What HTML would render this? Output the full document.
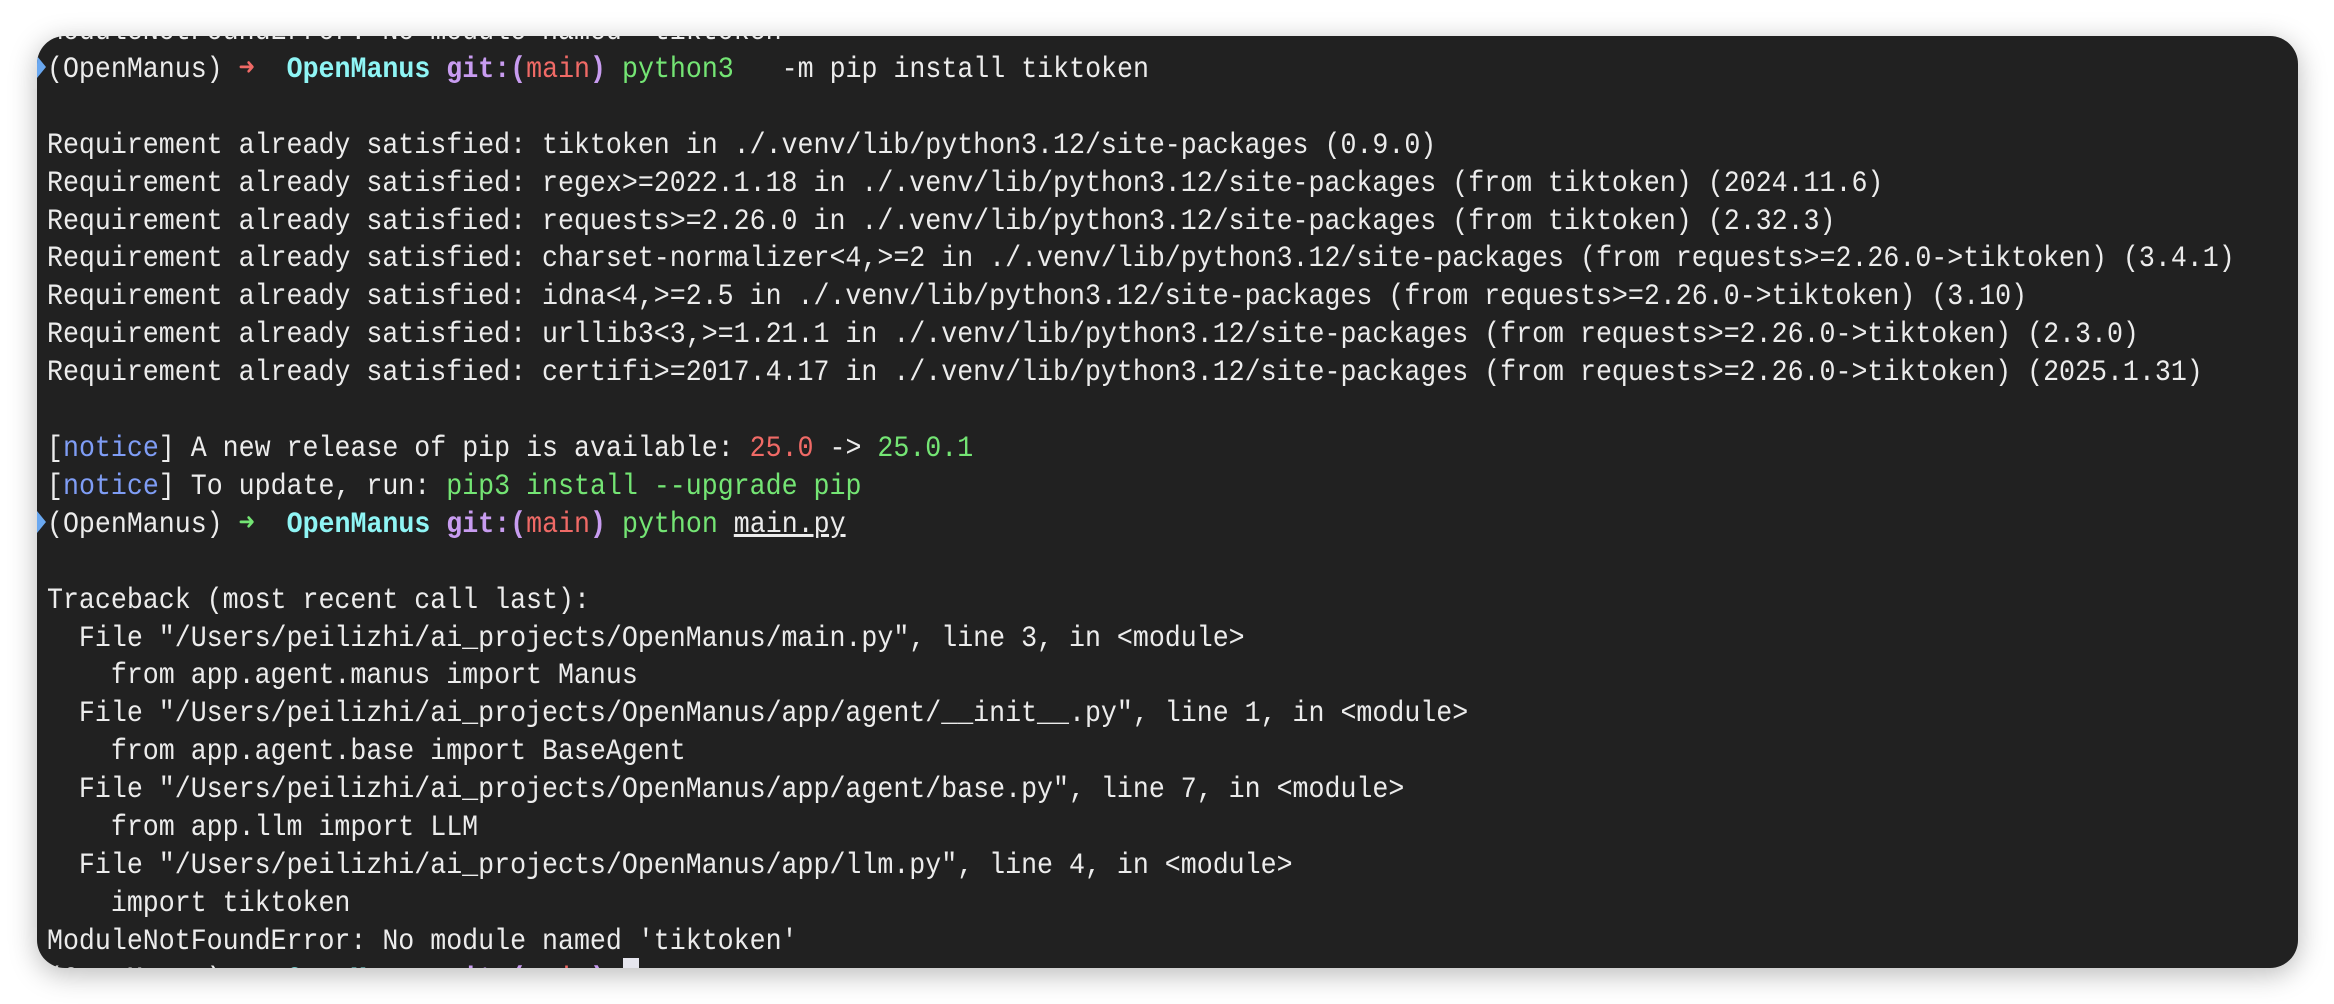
<!DOCTYPE html>
<html><head><meta charset="utf-8"><style>
html,body{margin:0;padding:0;background:#fff;width:2334px;height:1004px;overflow:hidden}
.box{position:absolute;left:37px;top:36px;width:2261px;height:932px;background:#212121;border-radius:28px;overflow:hidden;box-shadow:0 6px 28px rgba(0,0,0,.28)}
pre{position:absolute;left:10px;top:-22px;margin:0;font-family:"Liberation Mono",monospace;font-size:30px;line-height:37.9px;color:#ececec;transform:scaleX(0.887);transform-origin:0 0;white-space:pre}
.c{color:#8ff5f5;font-weight:bold}.p{color:#c89cf0;font-weight:bold}.r{color:#f06a66}.g{color:#74e574}.b{color:#7f9df5}
.mk{position:absolute;left:0;width:0;height:0;border-top:11px solid transparent;border-bottom:11px solid transparent;border-left:9px solid #6aa8f0}
.cur{position:absolute;left:586px;top:922px;width:16px;height:36px;background:#e6e6ee}
</style></head><body>
<div class="box">
<div class="mk" style="top:20px"></div>
<div class="mk" style="top:475px"></div>
<pre>ModuleNotFoundError: No module named 'tiktoken'
(OpenManus) <span class="r">➜</span>  <span class="c">OpenManus</span> <span class="p">git:(</span><span class="r">main</span><span class="p">)</span> <span class="g">python3</span>   -m pip install tiktoken

Requirement already satisfied: tiktoken in ./.venv/lib/python3.12/site-packages (0.9.0)
Requirement already satisfied: regex&gt;=2022.1.18 in ./.venv/lib/python3.12/site-packages (from tiktoken) (2024.11.6)
Requirement already satisfied: requests&gt;=2.26.0 in ./.venv/lib/python3.12/site-packages (from tiktoken) (2.32.3)
Requirement already satisfied: charset-normalizer&lt;4,&gt;=2 in ./.venv/lib/python3.12/site-packages (from requests&gt;=2.26.0-&gt;tiktoken) (3.4.1)
Requirement already satisfied: idna&lt;4,&gt;=2.5 in ./.venv/lib/python3.12/site-packages (from requests&gt;=2.26.0-&gt;tiktoken) (3.10)
Requirement already satisfied: urllib3&lt;3,&gt;=1.21.1 in ./.venv/lib/python3.12/site-packages (from requests&gt;=2.26.0-&gt;tiktoken) (2.3.0)
Requirement already satisfied: certifi&gt;=2017.4.17 in ./.venv/lib/python3.12/site-packages (from requests&gt;=2.26.0-&gt;tiktoken) (2025.1.31)

[<span class="b">notice</span>] A new release of pip is available: <span class="r">25.0</span> -&gt; <span class="g">25.0.1</span>
[<span class="b">notice</span>] To update, run: <span class="g">pip3 install --upgrade pip</span>
(OpenManus) <span class="g">➜</span>  <span class="c">OpenManus</span> <span class="p">git:(</span><span class="r">main</span><span class="p">)</span> <span class="g">python</span> <u>main.py</u>

Traceback (most recent call last):
  File "/Users/peilizhi/ai_projects/OpenManus/main.py", line 3, in &lt;module&gt;
    from app.agent.manus import Manus
  File "/Users/peilizhi/ai_projects/OpenManus/app/agent/__init__.py", line 1, in &lt;module&gt;
    from app.agent.base import BaseAgent
  File "/Users/peilizhi/ai_projects/OpenManus/app/agent/base.py", line 7, in &lt;module&gt;
    from app.llm import LLM
  File "/Users/peilizhi/ai_projects/OpenManus/app/llm.py", line 4, in &lt;module&gt;
    import tiktoken
ModuleNotFoundError: No module named 'tiktoken'
(OpenManus) <span class="r">➜</span>  <span class="c">OpenManus</span> <span class="p">git:(</span><span class="r">main</span><span class="p">)</span></pre>
<div class="cur"></div>
</div>
</body></html>
